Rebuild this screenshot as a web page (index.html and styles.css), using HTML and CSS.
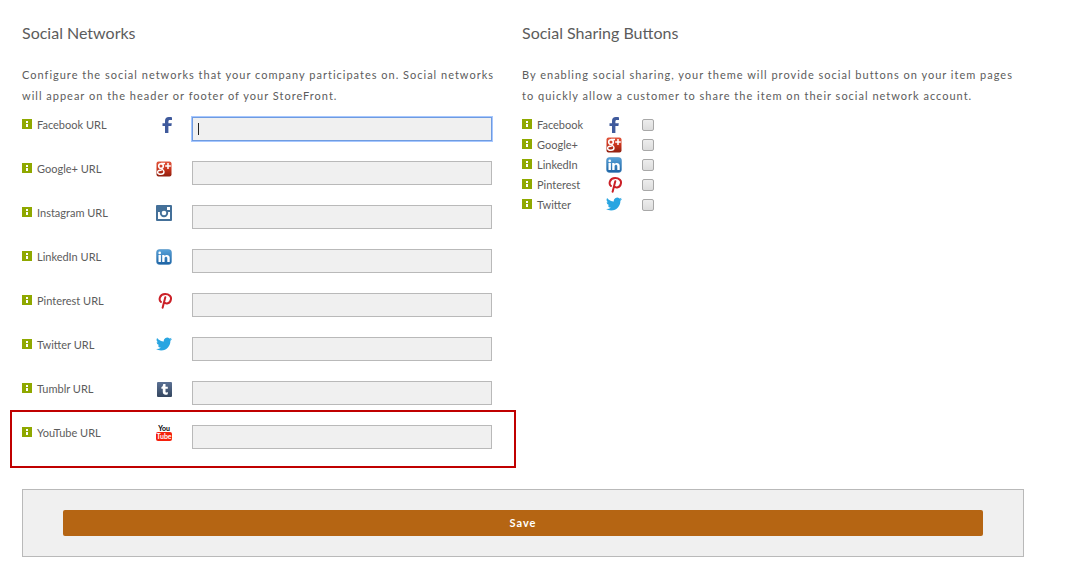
FILE: index.html
```html
<!DOCTYPE html>
<html lang="en">
<head>
<meta charset="utf-8">
<title>Social Networks</title>
<link rel="stylesheet" href="styles.css">
</head>
<body>
<svg class="sprite" aria-hidden="true">
  <defs>
    <linearGradient id="red" x1="0" y1="0" x2="0" y2="1"><stop offset="0" stop-color="#e2563d"/><stop offset=".5" stop-color="#c9331c"/><stop offset="1" stop-color="#8f2010"/></linearGradient>
    <linearGradient id="blue" x1="0" y1="0" x2="0" y2="1"><stop offset="0" stop-color="#58a3da"/><stop offset="1" stop-color="#1c62a3"/></linearGradient>
    <linearGradient id="navy" x1="0" y1="0" x2="0" y2="1"><stop offset="0" stop-color="#5b7194"/><stop offset="1" stop-color="#34465f"/></linearGradient>
  </defs>
  <symbol id="info" viewBox="0 0 10 10"><path fill="#8fa800" d="M0 0h10v10H0z"/><path fill="#fff" d="M4 2h2v2H4zM4 5h2v3H4z"/></symbol>
  <symbol id="facebook" viewBox="0 0 16 16"><path fill="#3f5a9c" d="M9 16V9H6.500V6.200H9V4c0-2.600 1.400-4 3.800-4 1.500 0 2.700.1 3.200.2v2.700h-1.900c-1.400 0-1.700.6-1.700 1.600v1.700h3.400L15.400 9h-3v7z"/></symbol>
  <symbol id="google" viewBox="0 0 16 16"><rect x=".5" y=".5" width="15" height="15" rx="2" fill="url(#red)"/><g fill="none" stroke="#fff"><circle cx="5" cy="5" r="2.300" stroke-width="1.600"/><path stroke-width="1.400" d="M5 2.500h4M6 7.200c-1 1 2 1.500 2 3.600 0 1.700-1.300 2.500-3 2.500s-3.400-.7-3.400-2.100S3.300 9 5.800 9"/><path stroke-width="1.500" d="M12 2v6M9.200 5h5.600"/></g></symbol>
  <symbol id="instagram" viewBox="0 0 16 16"><rect width="16" height="16" rx="1" fill="#447099"/><path fill="#fff" d="M11 2h3v3h-3zM2 7h12v7H2z"/><circle cx="8" cy="8" r="4.200" fill="#447099"/><circle cx="8" cy="8" r="2.300" fill="#fff"/></symbol>
  <symbol id="linkedin" viewBox="0 0 16 16"><rect x=".5" y=".5" width="15" height="15" rx="3" fill="url(#blue)" stroke="#4586bd" stroke-width=".5"/><path fill="#fff" d="M2.500 6h2.400v7H2.500zM6.200 6h2.300v1c1.200-1.700 5.200-1.700 5.200 1.800V13h-2.400V9.300c0-2-2.700-2-2.700 0V13H6.200z"/><circle cx="3.700" cy="3.900" r="1.300" fill="#fff"/></symbol>
  <symbol id="pinterest" viewBox="0 0 16 16"><path fill="none" stroke="#cb2027" stroke-width="2" stroke-linecap="round" d="M5 9C2.500 7 3.300 1.200 9.200 1.100c4 0 6.400 2.600 5.700 5.400-.8 4.300-5.200 4.800-6.600 2.700M9.300 4.300 6.600 14.700"/></symbol>
  <symbol id="twitter" viewBox="0 0 16 16"><path transform="translate(0 -1)" fill="#29a5e1" d="M16 3.040a6.500 6.500 0 0 1-1.890.52 3.300 3.300 0 0 0 1.450-1.820 6.600 6.600 0 0 1-2.090.8 3.290 3.290 0 0 0-5.600 3A9.300 9.300 0 0 1 1.110 2.100a3.290 3.290 0 0 0 1.020 4.380 3.300 3.300 0 0 1-1.490-.41v.04a3.290 3.290 0 0 0 2.640 3.220 3.300 3.300 0 0 1-1.480.06 3.290 3.290 0 0 0 3.070 2.280A6.600 6.600 0 0 1 0 13.030 9.300 9.300 0 0 0 5.030 14.500c6.040 0 9.340-5 9.340-9.340l-.01-.42A6.700 6.700 0 0 0 16 3.040z"/></symbol>
  <symbol id="tumblr" viewBox="0 0 16 16"><rect x="1" y="1" width="15" height="15" rx="1" fill="url(#navy)"/><path fill="#fff" d="M7.200 3h2.300v2.700h2.300v2H9.500v2.700c0 1.400 1 1.300 2.300.7v2.200c-2.300 1.100-5 .5-5-2.200V7.700H5.400V6.100C6.600 5.700 7 4.800 7.200 3z"/></symbol>
</svg>

<main class="page">
  <form class="settings">
    <div class="columns">
      <section class="column column-networks">
        <h2 class="title">Social Networks</h2>
        <p class="intro">Configure the social networks that your company participates on. Social networks will appear on the header or footer of your StoreFront.</p>
        <ul class="networks">
          <li class="network"><svg class="info"><use href="#info"/></svg><label for="u1">Facebook URL</label><svg class="icon"><use href="#facebook"/></svg><input class="field" type="text" id="u1" autofocus></li>
          <li class="network"><svg class="info"><use href="#info"/></svg><label for="u2">Google+ URL</label><svg class="icon"><use href="#google"/></svg><input class="field" type="text" id="u2"></li>
          <li class="network"><svg class="info"><use href="#info"/></svg><label for="u3">Instagram URL</label><svg class="icon"><use href="#instagram"/></svg><input class="field" type="text" id="u3"></li>
          <li class="network"><svg class="info"><use href="#info"/></svg><label for="u4">LinkedIn URL</label><svg class="icon"><use href="#linkedin"/></svg><input class="field" type="text" id="u4"></li>
          <li class="network"><svg class="info"><use href="#info"/></svg><label for="u5">Pinterest URL</label><svg class="icon"><use href="#pinterest"/></svg><input class="field" type="text" id="u5"></li>
          <li class="network"><svg class="info"><use href="#info"/></svg><label for="u6">Twitter URL</label><svg class="icon"><use href="#twitter"/></svg><input class="field" type="text" id="u6"></li>
          <li class="network"><svg class="info"><use href="#info"/></svg><label for="u7">Tumblr URL</label><svg class="icon"><use href="#tumblr"/></svg><input class="field" type="text" id="u7"></li>
          <li class="network highlighted"><svg class="info"><use href="#info"/></svg><label for="u8">YouTube URL</label><svg class="icon" viewBox="0 0 16 16"><rect y="7" width="16" height="9" rx="2" fill="#f5200c"/><text class="logo-text" x="8" y="6" fill="#000">You</text><text class="logo-text" x="8" y="14" fill="#fff">Tube</text></svg><input class="field" type="text" id="u8"></li>
        </ul>
      </section>
      <section class="column">
        <h2 class="title">Social Sharing Buttons</h2>
        <p class="intro">By enabling social sharing, your theme will provide social buttons on your item pages to quickly allow a customer to share the item on their social network account.</p>
        <ul class="shares">
          <li class="share"><svg class="info"><use href="#info"/></svg><label for="s1">Facebook</label><svg class="icon" viewBox="3 0 16 16"><use href="#facebook" width="16" height="16"/></svg><input class="check" type="checkbox" id="s1"></li>
          <li class="share"><svg class="info"><use href="#info"/></svg><label for="s2">Google+</label><svg class="icon"><use href="#google"/></svg><input class="check" type="checkbox" id="s2"></li>
          <li class="share"><svg class="info"><use href="#info"/></svg><label for="s3">LinkedIn</label><svg class="icon"><use href="#linkedin"/></svg><input class="check" type="checkbox" id="s3"></li>
          <li class="share"><svg class="info"><use href="#info"/></svg><label for="s4">Pinterest</label><svg class="icon"><use href="#pinterest"/></svg><input class="check" type="checkbox" id="s4"></li>
          <li class="share"><svg class="info"><use href="#info"/></svg><label for="s5">Twitter</label><svg class="icon"><use href="#twitter"/></svg><input class="check" type="checkbox" id="s5"></li>
        </ul>
      </section>
    </div>
    <div class="actions"><button class="save" type="submit">Save</button></div>
  </form>
</main>
</body>
</html>
```
FILE: styles.css
```css
* { box-sizing: border-box; }
body {
  margin: 0;
  background: #fff;
  color: #5c5c5c;
  font: 11px/20px Lato, "Liberation Sans", sans-serif;
}
.sprite { position: absolute; width: 0; height: 0; }
.page { padding: 22px 55px 20px 22px; }
.columns {
  display: grid;
  grid-template-columns: 1fr 1fr;
  padding-right: 2px;
}
.column-networks { padding-right: 20px; }
.title {
  margin: 0 0 20px;
  font-size: 16px;
  font-weight: 400;
  line-height: 22px;
}
.intro {
  margin: 0;
  line-height: 21px;
  letter-spacing: 1px;
}
.networks, .shares { list-style: none; margin: 0; padding: 0; }
.networks { padding: 9px 10px 0 0; }
.network {
  display: grid;
  grid-template-columns: 10px 124px 16px 1fr;
  align-items: start;
  height: 44px;
  position: relative;
}
.network label, .share label { padding-left: 5px; }
.info { display: block; width: 10px; height: 10px; margin-top: 4px; }
.icon { display: block; width: 16px; height: 16px; margin-top: 2px; }
.field {
  width: auto;
  height: 24px;
  margin: 2px 0 0 20px;
  padding: 0 5px;
  border: 1px solid #b9b9b9;
  border-radius: 0;
  background: #f0f0f0;
  color: #222;
  font: inherit;
}
.field:focus {
  outline: 1px solid #a6c7ff;
  border-color: #6f9be0;
  caret-color: transparent;
  background: linear-gradient(#222, #222) 5px 5px / 1px 12px no-repeat #f0f0f0;
}
.highlighted::after {
  content: "";
  position: absolute;
  inset: -13px -24px -1px -12px;
  border: 2px solid #c00000;
  pointer-events: none;
}
.shares { padding-top: 9px; }
.share {
  display: grid;
  grid-template-columns: 10px 74px 16px 1fr;
  align-items: start;
  height: 20px;
}
.check {
  appearance: none;
  width: 12px;
  height: 12px;
  margin: 4px 0 0 20px;
  border: 1px solid #a8a8a8;
  border-radius: 2px;
  background: linear-gradient(#ededed, #dcdcdc);
}
.check:checked { background: #3f5a9c; }
.actions {
  margin-top: 22px;
  padding: 20px 40px;
  border: 1px solid #b9b9b9;
  background: #f0f0f0;
}
.save {
  display: block;
  width: 100%;
  height: 26px;
  padding: 0;
  border: 0;
  border-radius: 2px;
  background: #b56513;
  color: #fff;
  font: 700 11px/26px Lato, "Liberation Sans", sans-serif;
  letter-spacing: 1px;
}
.logo-text {
  font: 700 7px Lato, "Liberation Sans", sans-serif;
  text-anchor: middle;
}
```
